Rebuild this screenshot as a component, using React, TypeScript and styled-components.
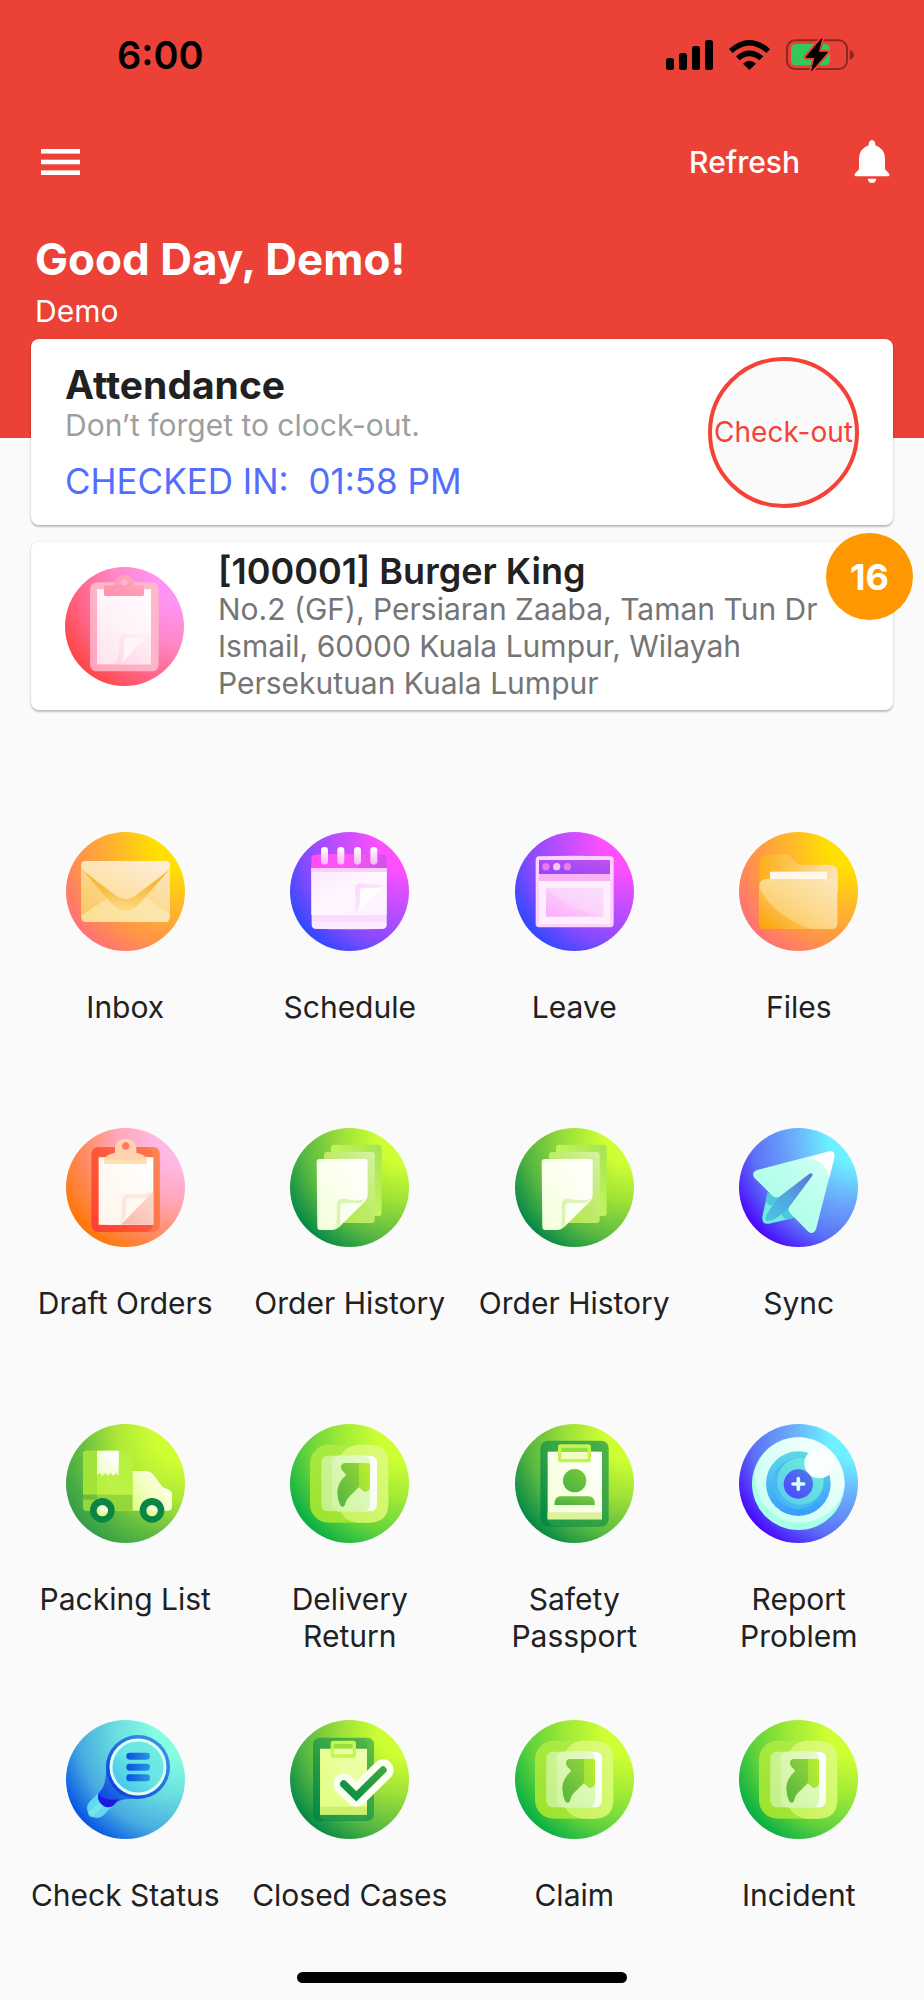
import React, { useId } from "react";
import styled, { createGlobalStyle } from "styled-components";

const GlobalStyle = createGlobalStyle`
  *, *::before, *::after { box-sizing: border-box; }
  body {
    margin: 0;
    background: #fafafa;
    color: #212121;
    font-family: Inter, "Liberation Sans", sans-serif;
  }
  h1, h2, p, ul { margin: 0; padding: 0; }
  button { font: inherit; border: 0; padding: 0; background: none; color: inherit; cursor: pointer; }
  a { color: inherit; text-decoration: none; }
  svg { display: block; flex: none; }
`;

const Page = styled.div`
  min-height: 100vh;
  display: flex;
  flex-direction: column;
`;

const Header = styled.header`
  background: #eb4137;
  color: #fff;
  padding-bottom: 108px;
`;

const StatusBar = styled.div`
  height: 110px;
  padding: 0 70px 0 117px;
  display: flex;
  align-items: center;
  justify-content: space-between;
  color: #000;
`;

const Clock = styled.time`
  font-size: 38px;
  font-weight: 600;
  line-height: 44px;
`;

const Indicators = styled.div`
  display: flex;
  align-items: center;
  gap: 16px;
`;

const Toolbar = styled.nav`
  height: 104px;
  padding: 0 34px 0 41px;
  display: flex;
  align-items: center;
  justify-content: space-between;
`;

const ToolbarActions = styled.div`
  display: flex;
  align-items: center;
  gap: 54px;
`;

const IconButton = styled.button`
  display: flex;
`;

const RefreshButton = styled.button`
  font-size: 30px;
  font-weight: 500;
  line-height: 37px;
`;

const Greeting = styled.div`
  padding: 19px 35px 0;
`;

const GreetingTitle = styled.h1`
  font-size: 44px;
  font-weight: 700;
  line-height: 52px;
`;

const GreetingName = styled.p`
  margin-top: 8px;
  font-size: 30px;
  line-height: 37px;
`;

const Main = styled.main`
  margin-top: -99px;
`;

const Cards = styled.div`
  padding: 0 31px;
  display: flex;
  flex-direction: column;
  gap: 17px;
`;

const Card = styled.section<{ $minHeight: number; $gap: number }>`
  position: relative;
  min-height: ${(p) => p.$minHeight}px;
  padding: 0 34px;
  display: flex;
  align-items: center;
  gap: ${(p) => p.$gap}px;
  background: #fff;
  border-radius: 8px;
  box-shadow: 0 2px 2px rgba(0, 0, 0, 0.22), 0 0 3px rgba(0, 0, 0, 0.1);
`;

const CardBody = styled.div`
  flex: 1;
  min-width: 0;
`;

const AttendanceTitle = styled.h2`
  font-size: 39px;
  font-weight: 700;
  line-height: 44px;
`;

const Hint = styled.p`
  color: #9e9e9e;
  font-size: 30px;
  line-height: 37px;
`;

const CheckedIn = styled.p`
  margin-top: 17px;
  color: #536dfe;
  font-size: 35px;
  line-height: 40px;
  white-space: pre-wrap;
`;

const CheckOutButton = styled.button`
  flex: none;
  width: 151px;
  height: 151px;
  border: 4px solid #f44336;
  border-radius: 50%;
  background: #fafafa;
  color: #f44336;
  font-size: 28px;
  white-space: nowrap;
  display: flex;
  align-items: center;
  justify-content: center;
`;

const PlaceTitle = styled.h2`
  font-size: 36px;
  font-weight: 600;
  line-height: 40px;
`;

const Address = styled.p`
  color: #757575;
  font-size: 30px;
  line-height: 37px;
`;

const Badge = styled.span`
  position: absolute;
  top: -9px;
  right: -20px;
  width: 87px;
  height: 87px;
  border-radius: 50%;
  background: #ff9800;
  color: #fff;
  font-size: 36px;
  font-weight: 700;
  display: flex;
  align-items: center;
  justify-content: center;
`;

const MenuGrid = styled.ul`
  list-style: none;
  margin-top: 122px;
  padding: 0 13px;
  display: grid;
  grid-template-columns: repeat(4, minmax(0, 1fr));
  grid-auto-rows: minmax(231px, auto);
  row-gap: 65px;
`;

const Tile = styled.a`
  display: flex;
  flex-direction: column;
  align-items: center;
  gap: 38px;
  padding: 0 14px;
`;

const TileLabel = styled.span`
  font-size: 30px;
  line-height: 37px;
  text-align: center;
`;

const WideLabel = styled(TileLabel)`
  white-space: nowrap;
`;

const HomeIndicator = styled.div`
  margin: auto auto 17px;
  width: 330px;
  height: 11px;
  border-radius: 6px;
  background: #000;
`;

/* ---------- drawing helpers ---------- */

const useUid = () => useId().replace(/\W/g, "");

type FadeProps = { id: string; c: string[]; x1?: number; y1?: number; x2?: number; y2?: number };
const Fade = ({ id, c, x1 = 0, y1 = 1, x2 = 1, y2 = 0 }: FadeProps) => (
  <linearGradient id={id} x1={x1} y1={y1} x2={x2} y2={y2}>
    {c.map((color, i) => (
      <stop key={i} offset={i / (c.length - 1)} stopColor={color} />
    ))}
  </linearGradient>
);

const DISC_STOPS = [0.2, 0.48, 0.76, 1];

const Disc = ({ uid, c, children }: { uid: string; c: string[]; children: React.ReactNode }) => (
  <svg width="119" height="119" viewBox="0 0 357 357" aria-hidden="true">
    <defs>
      <radialGradient id={uid + "bg"} cx="0.98" cy="0.08" r="1.15">
        {c.map((color, i) => (
          <stop key={i} offset={DISC_STOPS[i]} stopColor={color} />
        ))}
      </radialGradient>
    </defs>
    <circle cx="178.5" cy="178.5" r="178.5" fill={`url(#${uid}bg)`} />
    {children}
  </svg>
);

/* ---------- tile icons ---------- */

const YELLOW = ["#ffe000", "#ffb82a", "#ff9448", "#ff7078"];
const VIOLET = ["#ff50ff", "#c44dff", "#864bff", "#2a48ff"];
const GREEN = ["#ceff33", "#9ce038", "#58b842", "#008647"];
const LIME = ["#ceff33", "#9fea36", "#5fd13c", "#00ac46"];
const BLUE = ["#6df0ff", "#6aa8fb", "#5c70f6", "#4700ff"];

const InboxIcon = () => {
  const u = useUid();
  return (
    <Disc uid={u} c={YELLOW}>
      <defs>
        <Fade id={u + "a"} c={["#fcc45c", "#fbd98f", "#fbe7c4"]} />
        <Fade id={u + "b"} c={["#ffdc92", "#fdeedd"]} />
        <Fade id={u + "c"} c={["#f8b32a", "#f9bc44", "#fbdc8c"]} x2={0} y1={0} y2={1} />
        <Fade id={u + "d"} c={["#fbe096", "#fce7b2"]} x2={1} y2={1} />
      </defs>
      <rect x="45" y="87" width="267" height="183" rx="14" fill={`url(#${u}a)`} />
      <path d="M47 250 L122 200 Q179 168 240 195 L310 248 Q312 270 298 270 H59 Q47 270 47 250Z" fill={`url(#${u}d)`} />
      <path d="M46 110 L140 218 Q179 256 218 218 L312 110 L208 180 H150Z" fill={`url(#${u}c)`} />
      <path d="M59 87 H298 Q312 87 312 101 Q310 113 302 119 L208 191 Q179 212 150 191 L56 119 Q46 113 45 101 Q45 87 59 87Z" fill={`url(#${u}b)`} />
    </Disc>
  );
};

const ScheduleIcon = () => {
  const u = useUid();
  return (
    <Disc uid={u} c={VIOLET}>
      <defs>
        <Fade id={u + "a"} c={["#ff4ef4", "#ff55f6", "#cf52ea"]} y1={0} />
        <Fade id={u + "b"} c={["#fbe9ff", "#fff8ff", "#fdf0ff"]} y1={0} y2={1} />
        <Fade id={u + "c"} c={["#ffffff", "#f6b8f6"]} x2={0} y1={0} y2={1} />
        <Fade id={u + "d"} c={["#f7c3fa", "#fff2ff"]} y1={0} y2={1} />
      </defs>
      <path d="M64 112 V80 Q64 68 76 68 Q178 62 278 68 Q290 68 290 80 V112Z" fill={`url(#${u}a)`} />
      <path d="M64 108 H290 V278 Q290 289 278 290 Q178 294 76 290 Q66 289 65 278Z" fill="#fbdcfd" />
      <rect x="64" y="108" width="226" height="12" fill="#fcd0fb" />
      <path d="M64 120 H290 V249 H64Z" fill={`url(#${u}b)`} />
      <path d="M66 269 H289 V280 Q288 290 278 290 H78 Q67 290 66 280Z" fill="#fdeaff" />
      <path d="M196 168 Q197 154 212 154 L280 160 L196 244Z" fill={`url(#${u}d)`} opacity="0.6" />
      <path d="M210 176 Q210 168 218 168 H276 L196 243 Q210 228 210 212Z" fill="#fff" />
      {[93, 142, 192, 241].map((x) => (
        <rect key={x} x={x} y="45" width="21" height="53" rx="10" fill={`url(#${u}c)`} />
      ))}
    </Disc>
  );
};

const LeaveIcon = () => {
  const u = useUid();
  return (
    <Disc uid={u} c={VIOLET}>
      <defs>
        <Fade id={u + "a"} c={["#8e49fa", "#c24ff0"]} />
        <Fade id={u + "b"} c={["#fbb0fa", "#fad4fb", "#fbdffb"]} />
      </defs>
      <path d="M72 73 Q178 69 286 73 Q296 74 296 84 V275 Q296 285 286 286 H72 Q62 285 62 275 V84 Q62 74 72 73Z" fill="#fdd3fb" />
      <rect x="72" y="84" width="213" height="42" fill={`url(#${u}a)`} />
      <rect x="72" y="126" width="213" height="21" fill="#fbb2f5" />
      <rect x="72" y="147" width="213" height="129" fill="#fdeffe" />
      <rect x="93" y="168" width="172" height="86" fill={`url(#${u}b)`} />
      <path d="M93 168 Q150 230 265 254 H93Z" fill="#f99ff8" opacity="0.18" />
      <circle cx="93" cy="104" r="11" fill="#ec78f0" />
      <circle cx="125" cy="104" r="11" fill="#fbc3f8" />
      <circle cx="157" cy="104" r="11" fill="#ec7cf2" />
    </Disc>
  );
};

const FilesIcon = () => {
  const u = useUid();
  return (
    <Disc uid={u} c={YELLOW}>
      <defs>
        <Fade id={u + "a"} c={["#fcaf18", "#fccb62", "#fbe6b8"]} y1={0} />
        <Fade id={u + "b"} c={["#fcc04a", "#fcd88a", "#fbe9c0"]} />
        <Fade id={u + "c"} c={["#fca000", "#fcc251", "#fbdc96"]} />
      </defs>
      <path d="M61 98 Q61 69 84 68 Q110 65 138 66 Q148 66 156 76 L178 98 H270 Q296 99 296 124 V180 H61Z" fill={`url(#${u}a)`} />
      <rect x="93" y="119" width="171" height="40" fill="#fff7ea" />
      <path d="M83 141 H275 Q294 142 295 160 V276 Q294 290 280 291 H76 Q62 290 61 276 V160 Q63 142 83 141Z" fill={`url(#${u}b)`} />
      <path d="M61 165 Q100 252 218 291 H76 Q62 290 61 276Z" fill={`url(#${u}c)`} />
    </Disc>
  );
};

const DraftIcon = () => {
  const u = useUid();
  return (
    <Disc uid={u} c={["#ffb8e4", "#ffa6b8", "#ff8a58", "#ff7400"]}>
      <defs>
        <Fade id={u + "a"} c={["#ff4030", "#ff5838", "#ff7c50"]} />
        <Fade id={u + "b"} c={["#fff6ee", "#fffaf4", "#ffffff"]} />
        <Fade id={u + "c"} c={["#f9b8ac", "#fbdccb"]} />
      </defs>
      <rect x="76" y="57" width="205" height="255" rx="20" fill={`url(#${u}a)`} />
      <path d="M240 57 H261 Q281 57 281 77 V292 Q281 312 261 312 H240 Q260 306 260 292 V77 Q258 60 240 57Z" fill="#ff8a56" opacity="0.6" />
      <path d="M98 88 Q180 86 262 88 V290 Q180 292 98 290Z" fill={`url(#${u}b)`} />
      <path d="M262 190 V290 H164 Z" fill={`url(#${u}c)`} />
      <path d="M168 230 Q166 198 186 198 Q230 204 262 188 L164 290Z" fill="#fbcfc4" opacity="0.45" />
      <path d="M180 220 Q180 210 190 210 H242 L166 288 Q182 262 180 245Z" fill="#fff8f2" />
      <path d="M114 107 V96 Q118 80 147 74 V58 Q152 33 179 33 Q206 33 211 58 V74 Q240 80 243 96 V107Z" fill="#ffd2b2" />
      <path d="M114 96 H243 V107 H114Z" fill="#ffe0b0" />
      <circle cx="179" cy="54" r="11" fill="#f87c66" />
    </Disc>
  );
};

const PlaceIcon = () => {
  const u = useUid();
  return (
    <Disc uid={u} c={["#ff94f4", "#ff88c8", "#ff6688", "#ff4340"]}>
      <defs>
        <Fade id={u + "a"} c={["#ffa4bc", "#ffb4c8", "#ffb8cc"]} />
        <Fade id={u + "b"} c={["#ffe2ec", "#fff4fa", "#fffaff"]} />
        <Fade id={u + "c"} c={["#ffd0e0", "#fff0f8"]} />
        <Fade id={u + "d"} c={["#ff90ac", "#ffa8c0"]} />
      </defs>
      <rect x="75" y="46" width="206" height="267" rx="20" fill={`url(#${u}a)`} />
      <rect x="96" y="66" width="162" height="226" fill={`url(#${u}b)`} />
      <path d="M164 222 Q166 194 190 200 Q232 206 258 194 V292 H150 Q164 262 164 222Z" fill={`url(#${u}c)`} opacity="0.7" />
      <path d="M177 222 Q177 211 188 211 H240 L172 288 Q178 262 177 245Z" fill="#fff5fa" />
      <path d="M122 55 H148 Q152 24 178 24 Q204 24 208 55 H232 Q237 55 237 60 V82 Q237 87 232 87 H122 Q117 87 117 82 V60 Q117 55 122 55Z" fill={`url(#${u}d)`} />
      <path d="M167 47 A11 11 0 0 1 189 47 Q188 54 178 54 Q168 54 167 47Z" fill="#ffb4d4" />
    </Disc>
  );
};

const OrdersIcon = () => {
  const u = useUid();
  return (
    <Disc uid={u} c={GREEN}>
      <defs>
        <Fade id={u + "a"} c={["#a6ea4e", "#bff45c", "#a4e34f"]} />
        <Fade id={u + "b"} c={["#a9e83f", "#bdea68", "#d6f2a4"]} />
        <Fade id={u + "c"} c={["#f4ffda", "#fbffee", "#ffffff"]} />
      </defs>
      <rect x="123" y="50" width="152" height="214" rx="10" fill={`url(#${u}a)`} />
      <rect x="102" y="72" width="152" height="213" rx="10" fill={`url(#${u}b)`} />
      <path d="M90 93 H223 Q233 93 233 103 V201 Q233 212 226 219 L150 295 Q139 306 125 306 H92 Q82 306 82 296 L80 103 Q80 93 90 93Z" fill={`url(#${u}c)`} />
      <path d="M140 232 Q141 208 164 212 Q205 222 226 212 L138 304 Q142 270 140 232Z" fill="#c6ec92" opacity="0.6" />
      <path d="M151 236 Q151 225 162 225 H219 L151 290Z" fill="#fbfff2" />
    </Disc>
  );
};

const SyncIcon = () => {
  const u = useUid();
  return (
    <Disc uid={u} c={BLUE}>
      <defs>
        <Fade id={u + "a"} c={["#48c8e4", "#52a4de", "#5c70d8"]} />
        <Fade id={u + "b"} c={["#b0ffe8", "#b6ffec", "#d8fff6"]} />
      </defs>
      <path d="M86 194 L70 266 Q68 291 90 287 L165 269 L150 235 L124 200Z" fill="#70ecdc" />
      <path d="M86 194 L80 222 Q96 240 110 228 L130 205Z" fill="#4ccadc" />
      <path d="M165 269 L150 235 L126 258 Q134 272 144 274Z" fill="#4ccadc" />
      <path d="M213 136 Q224 136 220 146 L150 238 Q104 284 82 278 Q76 272 84 258 Q98 234 124 204Z" fill={`url(#${u}a)`} />
      <path d="M54 126 L271 70 Q288 68 286 88 L231 304 Q222 322 208 311 L153 255 Q145 246 151 236 L221 142 Q222 134 213 136 L131 199 Q114 215 100 203 L46 149 Q36 134 54 126Z" fill={`url(#${u}b)`} />
      <path d="M208 90 L271 70 Q288 68 286 88 L271 150 Q262 98 208 90Z" fill="#fff" />
    </Disc>
  );
};

const TruckIcon = () => {
  const u = useUid();
  return (
    <Disc uid={u} c={["#ceff33", "#aee836", "#62bc40", "#2f9a48"]}>
      <defs>
        <Fade id={u + "a"} c={["#a4e534", "#bdf246", "#b4f03c"]} />
        <Fade id={u + "b"} c={["#fcffe0", "#f4ffc8", "#e2fb8a"]} x1={1} y1={0.2} x2={0} y2={0.9} />
        <Fade id={u + "c"} c={["#effcc4", "#ffffff"]} />
      </defs>
      <path d="M62 80 H190 Q200 81 200 91 V260 H62 Q51 259 51 248 V91 Q52 81 62 80Z" fill={`url(#${u}a)`} />
      <path d="M62 80 H93 V212 H51 V91 Q52 81 62 80Z" fill="#a0e43a" />
      <path d="M51 212 H200 V260 H62 Q51 259 51 248Z" fill="#93d83a" />
      <path d="M51 212 H93 V227 H51Z" fill="#6cbd3c" />
      <path d="M93 80 H158 V155 L150 147 L142 155 L134 147 L126 155 L117 147 L109 155 L101 147 L93 152Z" fill={`url(#${u}c)`} />
      <path d="M113 80 H158 V123 Q120 118 113 80Z" fill="#fff" opacity="0.7" />
      <path d="M200 141 H238 Q254 141 264 155 L290 190 L308 197 Q318 202 318 212 V248 Q317 260 306 260 H200Z" fill={`url(#${u}b)`} />
      <path d="M238 141 Q254 141 264 155 L290 190 L308 197 Q318 202 318 212 L298 218 Q286 170 238 141Z" fill="#fff" opacity="0.55" />
      {[109, 258].map((x) => (
        <g key={x}>
          <circle cx={x} cy="259" r="37" fill="#0a8546" />
          <circle cx={x} cy="260" r="17" fill="#e4fb98" />
          <path d={`M${x - 14} 252 A17 17 0 0 1 ${x + 17} 262 Q${x + 4} 266 ${x - 14} 252Z`} fill="#fff" opacity="0.7" />
        </g>
      ))}
    </Disc>
  );
};

const ArrowIcon = () => {
  const u = useUid();
  return (
    <Disc uid={u} c={LIME}>
      <defs>
        <Fade id={u + "a"} c={["#9ae22c", "#b2f050"]} />
        <Fade id={u + "b"} c={["#c4f25e", "#defc7a"]} />
        <Fade id={u + "c"} c={["#c4f088", "#d2f59a"]} />
        <Fade id={u + "d"} c={["#d0f5a0", "#e4fac8"]} />
        <Fade id={u + "e"} c={["#56b43e", "#78c83c", "#9cda38"]} />
        <Fade id={u + "f"} c={["#9fe038", "#b8f02c"]} />
        <Fade id={u + "g"} c={["#eefbdc", "#ffffff"]} />
      </defs>
      <rect x="60" y="62" width="235" height="234" rx="56" fill={`url(#${u}a)`} />
      <path d="M204 62 H239 Q295 64 295 118 V240 Q295 294 239 296 H204 Q150 290 147 240 V118 Q150 68 204 62Z" fill={`url(#${u}b)`} />
      <rect x="94" y="95" width="167" height="167" rx="20" fill={`url(#${u}c)`} />
      <rect x="126" y="95" width="135" height="167" rx="20" fill={`url(#${u}g)`} />
      <rect x="126" y="95" width="114" height="167" rx="20" fill={`url(#${u}d)`} />
      <path d="M164 117 H229 Q240 117 240 128 V188 Q236 205 222 202 L207 189 L176 220 Q167 230 165 242 Q160 252 152 245 Q142 228 142 202 Q144 174 169 152 L155 137 Q148 120 164 117Z" fill={`url(#${u}e)`} />
      <path d="M207 117 H229 Q240 117 240 128 V188 Q236 205 222 202 L207 189Z" fill={`url(#${u}f)`} />
    </Disc>
  );
};

const PassportIcon = () => {
  const u = useUid();
  return (
    <Disc uid={u} c={GREEN}>
      <defs>
        <Fade id={u + "a"} c={["#008746", "#2fa246", "#55b546"]} />
        <Fade id={u + "b"} c={["#f4ffd4", "#ffffff"]} />
        <Fade id={u + "c"} c={["#46b042", "#7ccb3a"]} />
      </defs>
      <rect x="76" y="50" width="205" height="258" rx="22" fill={`url(#${u}a)`} />
      <rect x="97" y="53" width="163" height="252" rx="20" fill="#3ea646" opacity="0.45" />
      <path d="M98 83 Q180 81 261 83 V286 H98Z" fill={`url(#${u}b)`} />
      <rect x="98" y="265" width="163" height="21" fill="#dbf39c" />
      <rect x="134" y="66" width="89" height="44" rx="3" fill="#f4fdc4" stroke="#c2f552" strokeWidth="10" />
      <rect x="139" y="71" width="79" height="13" fill="#90dc44" />
      <circle cx="179" cy="170" r="35" fill={`url(#${u}c)`} />
      <path d="M118 243 Q118 217 138 217 H220 Q240 217 240 243Z" fill={`url(#${u}c)`} />
    </Disc>
  );
};

const ReportIcon = () => {
  const u = useUid();
  return (
    <Disc uid={u} c={BLUE}>
      <defs>
        <Fade id={u + "a"} c={["#c4fff0", "#dcfff8", "#ffffff"]} />
        <Fade id={u + "b"} c={["#389cff", "#5ed8e4"]} x2={0} />
        <Fade id={u + "c"} c={["#58ccec", "#6ff0dc"]} />
        <Fade id={u + "d"} c={["#5040ff", "#4c80e8"]} />
      </defs>
      <circle cx="178" cy="179" r="139" fill="#a8ffe8" />
      <path d="M48 150 A130 130 0 0 1 178 40 A139 139 0 0 1 316 190 A135 125 0 0 1 178 296 A135 135 0 0 1 48 150Z" fill={`url(#${u}a)`} />
      <circle cx="178" cy="179" r="97" fill={`url(#${u}b)`} />
      <circle cx="178" cy="179" r="76" fill="#4ab8f4" />
      <circle cx="184" cy="172" r="70" fill={`url(#${u}c)`} />
      <circle cx="241" cy="118" r="45" fill="#f8fffe" />
      <circle cx="178" cy="180" r="44" fill={`url(#${u}d)`} />
      <path d="M178 164 V196 M162 180 H194" stroke="#d8fff8" strokeWidth="11" strokeLinecap="round" />
    </Disc>
  );
};

const StatusIcon = () => {
  const u = useUid();
  return (
    <Disc uid={u} c={["#86fce0", "#6ae0e0", "#48ace0", "#004fe4"]}>
      <defs>
        <Fade id={u + "a"} c={["#0a30e0", "#2070e0", "#3ca0e6"]} />
        <Fade id={u + "b"} c={["#3cb8f0", "#68e4e4", "#74f0e0"]} />
        <Fade id={u + "c"} c={["#0a50e0", "#2c98e4"]} y1={0} />
      </defs>
      <path d="M92 265 L120 237" stroke="#62d8ec" strokeWidth="58" strokeLinecap="round" />
      <path d="M76 282 L110 248" stroke="#8ceef0" strokeWidth="18" strokeLinecap="round" opacity="0.5" />
      <path d="M120 141 H200 L215 236 Q160 234 144 254 Q128 268 110 256 Q90 240 98 218 Q122 200 120 141Z" fill={`url(#${u}a)`} />
      <path d="M98 222 Q110 244 160 238 Q150 244 144 254 Q128 268 110 256 Q94 242 98 222Z" fill="#1c18e0" />
      <circle cx="216" cy="141" r="96" fill={`url(#${u}a)`} />
      <circle cx="216" cy="141" r="81" fill={`url(#${u}b)`} stroke="#dcfffa" strokeWidth="9" />
      {[98, 131, 163].map((y) => (
        <rect key={y} x="181" y={y} width="71" height="21" rx="10" fill={`url(#${u}c)`} />
      ))}
    </Disc>
  );
};

const ClosedIcon = () => {
  const u = useUid();
  return (
    <Disc uid={u} c={GREEN}>
      <defs>
        <Fade id={u + "a"} c={["#008746", "#2fa246", "#68c044"]} />
        <Fade id={u + "b"} c={["#e2ff7c", "#eeffb0"]} />
        <Fade id={u + "c"} c={["#0c8c46", "#3ca844"]} />
      </defs>
      <rect x="69" y="53" width="183" height="250" rx="20" fill={`url(#${u}a)`} />
      <rect x="90" y="55" width="141" height="246" rx="18" fill="#3ea646" opacity="0.45" />
      <path d="M90 86 H231 V284 H90Z" fill={`url(#${u}b)`} />
      <rect x="90" y="260" width="141" height="23" fill="#ccf06c" />
      <rect x="127" y="67" width="66" height="41" rx="3" fill="#ecffa4" stroke="#c2f84a" strokeWidth="10" />
      <rect x="132" y="72" width="56" height="14" fill="#98de40" />
      <path d="M162 192 L200 228 L279 150" fill="none" stroke="#fbfff0" strokeWidth="64" strokeLinecap="round" strokeLinejoin="round" />
      <path d="M161 192 L199 229 L279 150" fill="none" stroke={`url(#${u}c)`} strokeWidth="22" strokeLinecap="round" strokeLinejoin="miter" />
    </Disc>
  );
};

/* ---------- system and toolbar icons ---------- */

const SignalIcon = () => (
  <svg width="47" height="30" viewBox="0 0 47 30" aria-hidden="true">
    <rect x="0" y="18" width="8" height="12" rx="2.5" />
    <rect x="13" y="13" width="8" height="17" rx="2.5" />
    <rect x="26" y="6" width="8" height="24" rx="2.5" />
    <rect x="39" y="0" width="8" height="30" rx="2.5" />
  </svg>
);

const WifiIcon = () => (
  <svg width="41" height="30" viewBox="0 0 123 90" aria-hidden="true">
    <path d="M0 27 Q61 -27 123 27 L112 39 Q61 -6 11 39Z" />
    <path d="M21 49 Q61 14 103 49 L91 61 Q61 36 32 61Z" />
    <path d="M42 71 Q61 54 81 71 L61 90Z" />
  </svg>
);

const BatteryIcon = () => (
  <svg width="68" height="34" viewBox="0 0 204 102" aria-hidden="true">
    <rect x="3" y="7" width="180" height="86" rx="24" fill="none" stroke="#8e2721" strokeWidth="6" />
    <path d="M191 36 Q204 40 204 51 Q204 62 191 65Z" fill="#8e2721" />
    <rect x="15" y="18" width="117" height="64" rx="14" fill="#34c759" />
    <path d="M107 2 L60 58 H87 L77 98 L124 43 H97Z" fill="#000" stroke="#eb4137" strokeWidth="14" strokeLinejoin="round" />
    <path d="M107 2 L60 58 H87 L77 98 L124 43 H97Z" fill="#000" stroke="#000" strokeWidth="3" strokeLinejoin="round" />
  </svg>
);

const MenuIcon = () => (
  <svg width="39" height="26" viewBox="0 0 39 26" fill="#fff" aria-hidden="true">
    <rect y="0" width="39" height="4.6" />
    <rect y="10.7" width="39" height="4.6" />
    <rect y="21.4" width="39" height="4.6" />
  </svg>
);

const BellIcon = () => (
  <svg width="36" height="44" viewBox="0 0 108 132" fill="#fff" aria-hidden="true">
    <path d="M54 0 Q64 1 64 16 Q93 26 93 56 V88 L106 102 Q108 108 104 109 H4 Q0 108 2 102 L15 88 V56 Q15 26 44 16 Q44 1 54 0Z" />
    <path d="M41 116 H67 Q65 129 54 129 Q43 129 41 116Z" />
  </svg>
);

const tiles: { label: string; href: string; Icon: () => React.JSX.Element; wide?: boolean }[] = [
  { label: "Inbox", href: "#inbox", Icon: InboxIcon },
  { label: "Schedule", href: "#schedule", Icon: ScheduleIcon },
  { label: "Leave", href: "#leave", Icon: LeaveIcon },
  { label: "Files", href: "#files", Icon: FilesIcon },
  { label: "Draft Orders", href: "#drafts", Icon: DraftIcon },
  { label: "Order History", href: "#orders", Icon: OrdersIcon, wide: true },
  { label: "Order History", href: "#order-archive", Icon: OrdersIcon, wide: true },
  { label: "Sync", href: "#sync", Icon: SyncIcon },
  { label: "Packing List", href: "#packing", Icon: TruckIcon },
  { label: "Delivery Return", href: "#delivery-return", Icon: ArrowIcon },
  { label: "Safety Passport", href: "#safety-passport", Icon: PassportIcon },
  { label: "Report Problem", href: "#report", Icon: ReportIcon },
  { label: "Check Status", href: "#status", Icon: StatusIcon, wide: true },
  { label: "Closed Cases", href: "#closed", Icon: ClosedIcon, wide: true },
  { label: "Claim", href: "#claim", Icon: ArrowIcon },
  { label: "Incident", href: "#incident", Icon: ArrowIcon },
];

export default function App() {
  return (
    <Page>
      <GlobalStyle />
      <Header>
        <StatusBar>
          <Clock>6:00</Clock>
          <Indicators>
            <SignalIcon />
            <WifiIcon />
            <BatteryIcon />
          </Indicators>
        </StatusBar>
        <Toolbar>
          <IconButton type="button" aria-label="Open menu">
            <MenuIcon />
          </IconButton>
          <ToolbarActions>
            <RefreshButton type="button">Refresh</RefreshButton>
            <IconButton type="button" aria-label="Notifications">
              <BellIcon />
            </IconButton>
          </ToolbarActions>
        </Toolbar>
        <Greeting>
          <GreetingTitle>Good Day, Demo!</GreetingTitle>
          <GreetingName>Demo</GreetingName>
        </Greeting>
      </Header>
      <Main>
        <Cards>
          <Card $minHeight={186} $gap={16}>
            <CardBody>
              <AttendanceTitle>Attendance</AttendanceTitle>
              <Hint>Don’t forget to clock-out.</Hint>
              <CheckedIn>{"CHECKED IN:  01:58 PM"}</CheckedIn>
            </CardBody>
            <CheckOutButton type="button">Check-out</CheckOutButton>
          </Card>
          <Card $minHeight={168} $gap={34}>
            <PlaceIcon />
            <CardBody>
              <PlaceTitle>[100001] Burger King</PlaceTitle>
              <Address>
                No.2 (GF), Persiaran Zaaba, Taman Tun Dr Ismail, 60000 Kuala Lumpur, Wilayah
                Persekutuan Kuala Lumpur
              </Address>
            </CardBody>
            <Badge>16</Badge>
          </Card>
        </Cards>
        <MenuGrid>
          {tiles.map(({ label, href, Icon, wide }) => (
            <li key={href}>
              <Tile href={href}>
                <Icon />
                {wide ? <WideLabel>{label}</WideLabel> : <TileLabel>{label}</TileLabel>}
              </Tile>
            </li>
          ))}
        </MenuGrid>
      </Main>
      <HomeIndicator />
    </Page>
  );
}
